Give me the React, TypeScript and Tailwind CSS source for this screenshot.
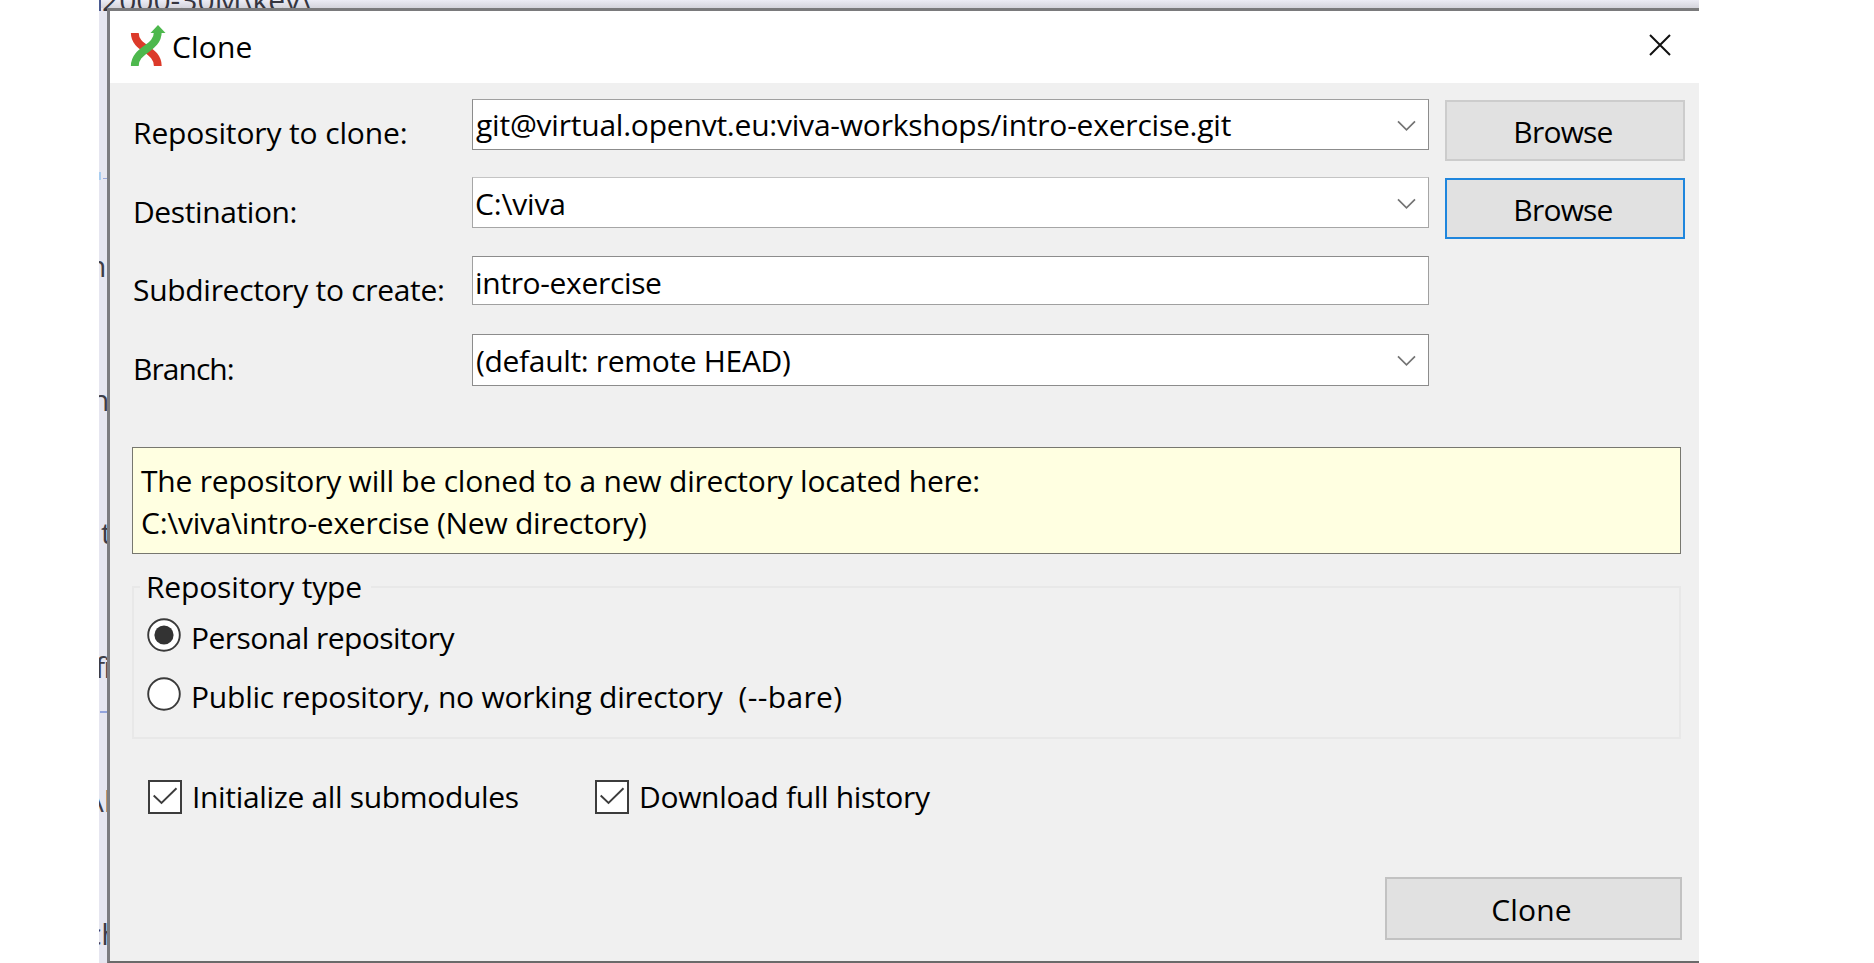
import React from "react";

type FieldProps = { text: string; textClass: string; boxClass: string; combo?: boolean };

function Chevron() {
  return (
    <svg className="mr-[12px] mt-[20px] h-3 w-[19px] shrink-0" viewBox="0 0 19 12" fill="none">
      <path d="M1 1.3 L9.5 9.8 L18 1.3" stroke="#747474" strokeWidth="1.7" />
    </svg>
  );
}

function Field({ text, textClass, boxClass, combo }: FieldProps) {
  return (
    <div className={`flex w-[957px] items-start justify-between border bg-white ${boxClass}`}>
      <span className={`whitespace-pre ${textClass}`}>{text}</span>
      {combo && <Chevron />}
    </div>
  );
}

function Check() {
  return (
    <span className="flex h-[34px] w-[34px] shrink-0 items-center justify-center border-2 border-[#3c3c3c] bg-white">
      <svg className="h-[20px] w-[26px]" viewBox="0 0 26 20" fill="none">
        <path d="M1.7 8.5 L9.5 16 L24.5 1.2" stroke="#3c3c3c" strokeWidth="1.9" />
      </svg>
    </span>
  );
}

function Radio({ on }: { on?: boolean }) {
  return (
    <svg className="h-[34px] w-[34px] shrink-0" viewBox="0 0 34 34">
      <circle cx="17" cy="17" r="15.8" fill="#fff" stroke="#3a3a3a" strokeWidth="1.9" />
      {on && <circle cx="17" cy="17" r="9.6" fill="#333" />}
    </svg>
  );
}

function Logo() {
  return (
    <svg className="ml-[20px] mt-[14px] h-[42px] w-[36px] shrink-0" viewBox="0 0 36 42" fill="none">
      <path d="M4.8 8 C4.8 24 27.8 24 27.8 41" stroke="#dc3a2a" strokeWidth="7.8" />
      <path d="M4.8 41 C4.8 24 27.8 24 27.8 7" stroke="#4db84d" strokeWidth="7.8" />
      <path d="M20.5 8 L28 0 L35.5 8 Z" fill="#4db84d" />
    </svg>
  );
}

export default function App() {
  return (
    <div className="h-[963px] w-[1874px] overflow-hidden bg-white pl-[99px] font-['Open_Sans',sans-serif] text-[30px] leading-[40px] text-black">
      <div className="relative h-[963px] w-[1600px] overflow-hidden bg-[#e6e6f0] pl-2 pt-2">
        <div className="absolute left-0 top-0 h-2 w-full bg-linear-to-b from-[#ececf5] to-[#d4d4dc]" />
        <div className="absolute left-0 top-0 h-[11px] w-[2px] bg-[#4a5a90]" />
        <span className="absolute left-[3px] top-[-20px] whitespace-pre text-[#35353f]">{"2000-30M\\key\\"}</span>
        <span className="absolute left-[-11px] top-[246px] text-[#3d3d48]">n</span>
        <span className="absolute left-[-8px] top-[380px] text-[#3d3d48]">n</span>
        <span className="absolute left-[2px] top-[513px] text-[#3d3d48]">t</span>
        <span className="absolute left-[-4px] top-[647px] tracking-[-1.5px] text-[#3d3d48]">fi</span>
        <span className="absolute left-[-6px] top-[781px] text-[#3d3d48]">\l</span>
        <span className="absolute left-[-12px] top-[914px] text-[#3d3d48]">ch</span>
        <div className="absolute left-0 top-[172px] h-2 w-[2px] bg-[#a9cdf0]" />
        <div className="absolute left-[4px] top-[178px] h-px w-1 bg-[#98a8dc]" />
        <div className="absolute left-[1px] top-[711px] h-[2px] w-[7px] bg-[#93a4dd]" />

        <div className="relative h-[955px] w-[1592px] border-b-2 border-l-[3px] border-t-[3px] border-b-[#6a6a6a] border-l-[#7c7c80] border-t-[#7a7a7c] bg-[#f0f0f0]">
          <header className="flex h-[72px] items-start bg-white">
            <Logo />
            <span className="ml-[6px] mt-[16px] tracking-[0.17px]">Clone</span>
            <svg className="ml-auto mr-[28px] mt-[23px] h-[22px] w-[22px]" viewBox="0 0 22 22">
              <path d="M1 1 L21 21 M21 1 L1 21" stroke="#111" strokeWidth="2" />
            </svg>
          </header>

          <main className="pl-[22px] pt-[16px]">
            <div className="flex h-[78px] items-start">
              <span className="w-[340px] pl-[1px] pt-[14px] tracking-[-0.13px]">Repository to clone:</span>
              <Field combo text="git@virtual.openvt.eu:viva-workshops/intro-exercise.git" boxClass="h-[51px] border-[#8c8c8c] border-t-[#a0a0a0]" textClass="pt-[5px] pl-[3px] tracking-[-0.219px]" />
              <button className="ml-[16px] mt-[1px] h-[61px] w-[240px] border-2 border-[#cccccc] bg-[#e1e1e1] pr-[4px] pt-[2px] tracking-[-0.8px]">Browse</button>
            </div>
            <div className="flex h-[79px] items-start">
              <span className="w-[340px] pl-[1px] pt-[15px] tracking-[-0.4px]">Destination:</span>
              <Field combo text={"C:\\viva"} boxClass="h-[51px] border-[#a6a6a6] border-t-[#c4c4c4]" textClass="pt-[6px] pl-[2px] tracking-[-0.19px]" />
              <button className="ml-[16px] mt-[1px] h-[61px] w-[240px] border-2 border-[#1f86dd] bg-[#e1e1e1] pr-[4px] pt-[2px] tracking-[-0.8px]">Browse</button>
            </div>
            <div className="flex h-[78px] items-start">
              <span className="w-[340px] pl-[1px] pt-[14px] tracking-[-0.3px]">Subdirectory to create:</span>
              <Field text="intro-exercise" boxClass="h-[49px] border-[#a0a0a0] border-t-[#8c8c8c]" textClass="pt-[6px] pl-[2px] tracking-[-0.34px]" />
            </div>
            <div className="flex h-[113px] items-start">
              <span className="w-[340px] pl-[1px] pt-[15px] tracking-[-0.95px]">Branch:</span>
              <Field combo text="(default: remote HEAD)" boxClass="h-[52px] border-[#8c8c8c]" textClass="pt-[6px] pl-[3px] tracking-[-0.33px]" />
            </div>

            <div className="flex h-[107px] w-[1549px] flex-col gap-[2px] border border-[#77776f] bg-[#ffffe1] pl-[8px] pt-[13px]">
              <span className="tracking-[-0.21px]">The repository will be cloned to a new directory located here:</span>
              <span className="tracking-[-0.27px]">{"C:\\viva\\intro-exercise (New directory)"}</span>
            </div>

            <fieldset className="mt-[13px] h-[172px] w-[1549px] border-2 border-[#e8e8e8] pl-[13px]">
              <legend className="ml-[-7px] pl-[6px] pr-[9px] tracking-[-0.16px]">Repository type</legend>
              <div className="flex items-start">
                <span className="mt-[11px] h-[34px]"><Radio on /></span>
                <span className="ml-[10px] mt-[11px] tracking-[-0.55px]">Personal repository</span>
              </div>
              <div className="flex items-start">
                <span className="mt-[19px] h-[34px]"><Radio /></span>
                <span className="ml-[10px] mt-[19px] tracking-[-0.22px]">Public repository, no working directory</span>
                <span className="ml-[16px] mt-[19px] tracking-[0.35px]">(--bare)</span>
              </div>
            </fieldset>

            <div className="mt-[37px] flex h-[101px] items-start pl-[16px]">
              <div className="flex w-[447px] items-start gap-[10px]">
                <span className="mt-[4px]"><Check /></span>
                <span className="mt-px tracking-[-0.33px]">Initialize all submodules</span>
              </div>
              <div className="flex items-start gap-[10px]">
                <span className="mt-[4px]"><Check /></span>
                <span className="mt-px tracking-[-0.33px]">Download full history</span>
              </div>
            </div>

            <button className="ml-[1253px] block h-[63px] w-[297px] border-2 border-[#c2c2c2] bg-[#e1e1e1] pr-[4px] pt-[2px] tracking-[0.17px]">Clone</button>
          </main>
        </div>
      </div>
    </div>
  );
}
